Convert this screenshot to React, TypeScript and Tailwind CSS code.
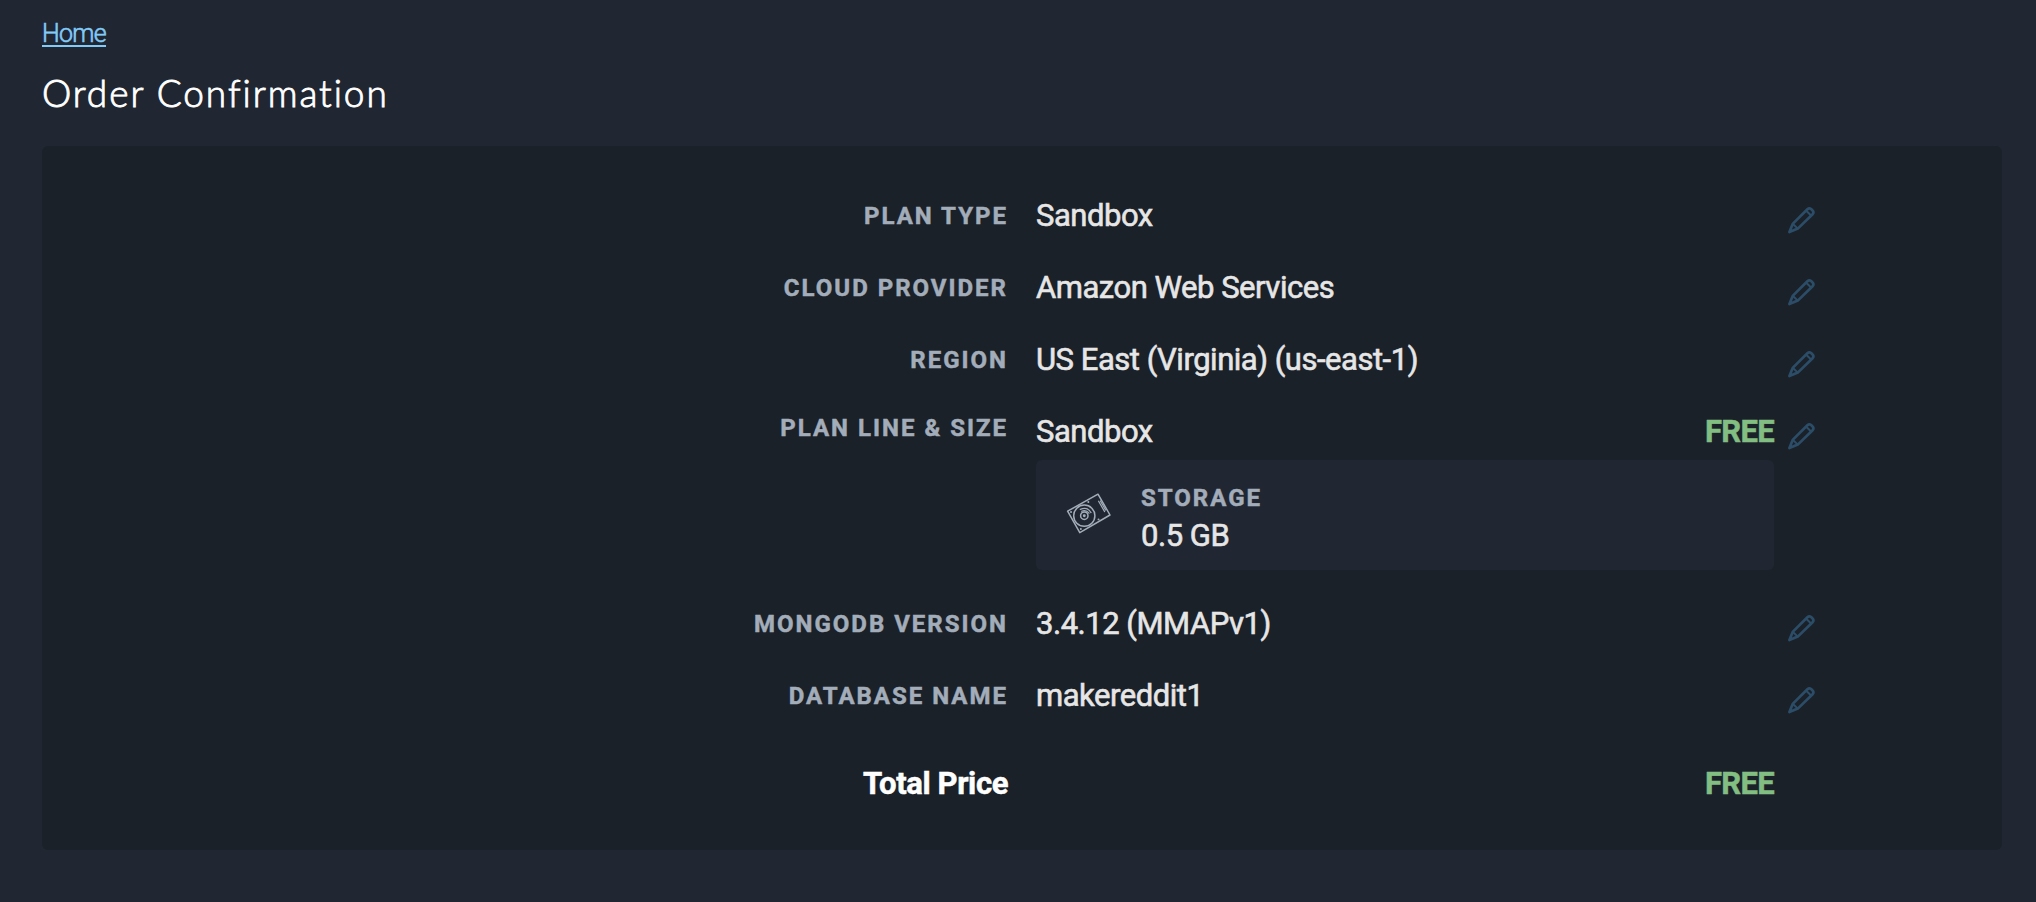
import type { ReactNode } from "react";

function PencilIcon() {
  return (
    <svg
      className="h-8 w-8 shrink-0"
      viewBox="0 0 32 32"
      fill="none"
      stroke="#2c4d68"
      strokeWidth="2.7"
      strokeLinejoin="round"
      strokeLinecap="round"
    >
      <path d="M3.4 27 L6.7 18.9 L21.4 4.2 Q23.3 2.6 25.1 4 L26.7 5.6 Q28.2 7.4 26.6 9.2 L11.8 23.6 Z" />
      <path d="M20.2 5.7 L25.1 10.5 M7 19 L11.5 23.4" strokeWidth="2" />
    </svg>
  );
}

function DiskIcon() {
  return (
    <svg
      className="h-[42px] w-[46px] shrink-0"
      viewBox="0 0 46 42"
      fill="none"
      stroke="#a3adba"
      strokeWidth="1.5"
      strokeLinejoin="round"
      strokeLinecap="round"
    >
      <path d="M1.6 18.2 L32 1.2 L44 22 L13.8 39.6 Z" />
      <circle cx="18.3" cy="22.7" r="10.6" />
      <circle cx="18.3" cy="22.7" r="3.7" />
      <circle cx="18.3" cy="22.7" r="0.7" />
      <path d="M14.3 16.4 Q21.5 13.4 25 19.6 M15.6 18.2 Q20.3 16.6 23 20.2" strokeWidth="1.2" />
      <path d="M32.6 8.2 L38.6 18.6 M34.4 8 L39.6 17" strokeWidth="1.2" />
      <path d="M5 19 h.1 M22.3 9 h.1 M14.8 36 h.1 M32.5 26.4 h.1" strokeWidth="1.9" />
    </svg>
  );
}

const labelText =
  "text-[24px] font-bold uppercase tracking-[2px] text-[#a3adba] [-webkit-text-stroke:0.5px_#a3adba]";
const valueText =
  "text-[31px] tracking-[-0.48px] text-[#e6e6e6] [-webkit-text-stroke:0.6px_#e6e6e6]";

function Row({
  label,
  value,
  price,
  raised,
  children,
}: {
  label: string;
  value: string;
  price?: string;
  raised?: boolean;
  children?: ReactNode;
}) {
  return (
    <div className="mb-7 grid grid-cols-[966px_738px_1fr]">
      <div className={`${labelText} text-right leading-[44px] ${raised ? "-mt-1" : ""}`}>
        {label}
      </div>
      <div className="-mr-7 ml-7">
        <div className={`flex justify-between leading-[44px] ${valueText}`}>
          <span>{value}</span>
          {price && (
            <span className="font-bold tracking-[-0.7px] text-[#82bd82] [-webkit-text-stroke:0.5px_#82bd82]">
              {price}
            </span>
          )}
        </div>
        {children}
      </div>
      <div className="pt-[11px] pl-10">
        <PencilIcon />
      </div>
    </div>
  );
}

export default function App() {
  return (
    <div className="h-[902px] bg-[#212732] px-[42px] pt-4 font-['Roboto',sans-serif]">
      <a
        href="#"
        className="block w-fit text-[25px] leading-9 font-light tracking-[-0.7px] text-[#82cbf8] underline decoration-2 underline-offset-[3px] [-webkit-text-stroke:0.6px_#82cbf8]"
      >
        Home
      </a>
      <h1 className="mt-[17px] font-['Lato',sans-serif] text-[37px] leading-[48px] font-light tracking-[1.95px] text-white [-webkit-text-stroke:0.9px_#ffffff]">
        Order Confirmation
      </h1>
      <main className="mt-[29px] h-[704px] w-[1960px] rounded-md bg-[#1b2129] pt-12">
        <Row label="Plan Type" value="Sandbox" />
        <Row label="Cloud Provider" value="Amazon Web Services" />
        <Row label="Region" value="US East (Virginia) (us-east-1)" />
        <Row label="Plan Line & Size" value="Sandbox" price="FREE" raised>
          <div className="mt-1.5 mb-1 flex h-[110px] items-start rounded-md bg-[#212732] pl-[30px]">
            <div className="mt-[33px]">
              <DiskIcon />
            </div>
            <div className="ml-[29px] pt-5">
              <div className={`${labelText} leading-9`}>Storage</div>
              <div className={`${valueText} leading-[40px]`}>0.5 GB</div>
            </div>
          </div>
        </Row>
        <Row label="MongoDB Version" value="3.4.12 (MMAPv1)" />
        <Row label="Database Name" value="makereddit1" />
        <div className="mt-11 grid grid-cols-[966px_738px] text-[31px] leading-[44px] font-bold">
          <div className="text-right tracking-[-0.4px] text-white [-webkit-text-stroke:0.5px_#ffffff]">
            Total Price
          </div>
          <div className="-mr-7 text-right tracking-[-0.7px] text-[#82bd82] [-webkit-text-stroke:0.5px_#82bd82]">
            FREE
          </div>
        </div>
      </main>
    </div>
  );
}
